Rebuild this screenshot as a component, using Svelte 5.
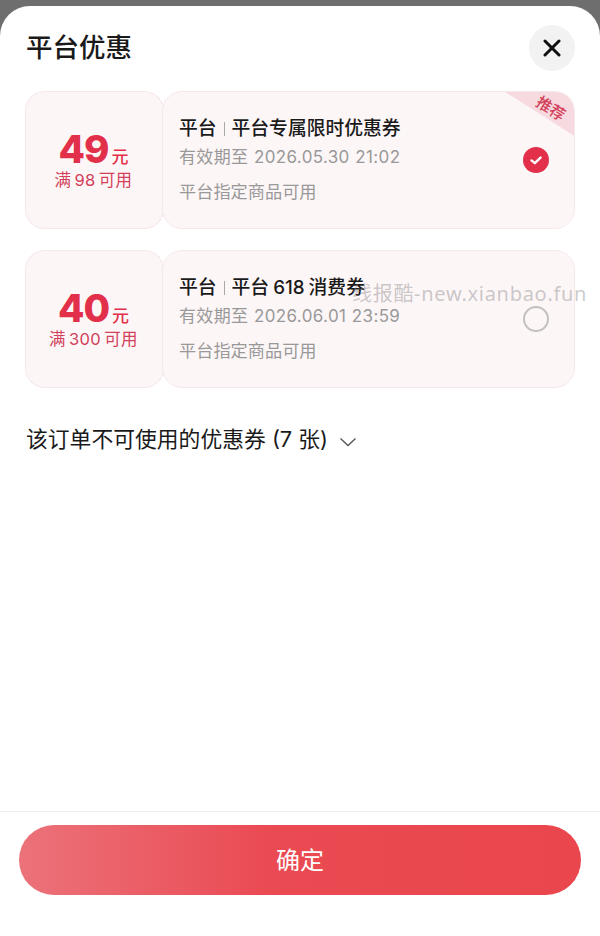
<script>
	const coupons = [
		{ amount: '49', min: '满 98 可用', name: '平台专属限时优惠券', expire: '2026.05.30 21:02', selected: true },
		{ amount: '40', min: '满 300 可用', name: '平台 618 消费券', expire: '2026.06.01 23:59', selected: false }
	];
</script>

<div class="page">
	<div class="sheet">
		<header class="header">
			<h1>平台优惠</h1>
			<button class="close" aria-label="关闭">
				<svg width="18" height="18" viewBox="0 0 18 18">
					<path d="M2 2 L16 16 M16 2 L2 16" stroke="#111" stroke-width="3" stroke-linecap="round" fill="none" />
				</svg>
			</button>
		</header>

		<div class="list">
			{#each coupons as c}
				<div class="coupon">
					<div class="left">
						<div class="price"><b>{c.amount}</b><span>元</span></div>
						<div class="min">{c.min}</div>
					</div>
					<div class="right">
						<div class="info">
							<div class="title">平台<i></i>{c.name}</div>
							<div class="expire">有效期至 {c.expire}</div>
							<div class="scope">平台指定商品可用</div>
						</div>
						{#if c.selected}
							<svg class="radio" width="26" height="26" viewBox="0 0 26 26">
								<circle cx="13" cy="13" r="13" fill="#e2304a" />
								<path d="M8.5 13.4 L11.8 16.2 L17.6 10.6" stroke="#fff" stroke-width="2.4" stroke-linecap="round" stroke-linejoin="round" fill="none" />
							</svg>
							<div class="ribbon"><span>推荐</span></div>
						{:else}
							<span class="radio empty"></span>
						{/if}
					</div>
				</div>
			{/each}
		</div>

		<div class="unusable">
			<span>该订单不可使用的优惠券 (7 张)</span>
			<svg width="18" height="10" viewBox="0 0 18 10">
				<path d="M1.5 1.5 L9 8.5 L16.5 1.5" stroke="#555" stroke-width="1.3" fill="none" />
			</svg>
		</div>

		<footer class="footer">
			<button class="confirm">确定</button>
		</footer>

		<div class="watermark">线报酷-new.xianbao.fun</div>
	</div>
</div>

<style>
	:global(body) {
		margin: 0;
	}
	.page {
		width: 600px;
		height: 936px;
		padding-top: 6px;
		box-sizing: border-box;
		background: linear-gradient(#6e6e6e, #7c7c7c);
		font-family: 'Inter', 'Noto Sans CJK SC', sans-serif;
	}
	.sheet {
		position: relative;
		height: 930px;
		background: #fff;
		border-radius: 30px 30px 0 0;
		display: flex;
		flex-direction: column;
		overflow: hidden;
	}
	.header {
		display: flex;
		justify-content: space-between;
		align-items: center;
		padding: 19px 25px 0 26px;
		height: 46px;
	}
	h1 {
		margin: -2px 0 0;
		font-size: 26.5px;
		font-weight: 500;
		color: #1a1a1a;
		line-height: 46px;
	}
	.close {
		width: 46px;
		height: 46px;
		border: none;
		border-radius: 50%;
		background: #f2f2f2;
		display: flex;
		align-items: center;
		justify-content: center;
		padding: 0;
	}
	.list {
		display: flex;
		flex-direction: column;
		gap: 21px;
		padding: 20px 25px 0;
	}
	.coupon {
		display: flex;
		height: 138px;
	}
	.left {
		width: 139px;
		box-sizing: border-box;
		background: #fdf6f7;
		border: 1.5px solid #f6e8ea;
		border-right: 1.5px dashed #f0d8dd;
		border-radius: 20px;
		display: flex;
		flex-direction: column;
		align-items: center;
		justify-content: center;
		color: #d2405a;
		padding: 0 2px 1px 0;
	}
	.price {
		display: flex;
		align-items: baseline;
		color: #e2304a;
		line-height: 40px;
		height: 40px;
	}
	.price b {
		font-size: 38.5px;
		font-weight: 800;
		letter-spacing: -1px;
	}
	.price span {
		font-size: 17px;
		margin-left: 3px;
		font-weight: 500;
	}
	.min {
		font-size: 16.5px;
		line-height: 22px;
		word-spacing: -2px;
		letter-spacing: 0.4px;
	}
	.right {
		position: relative;
		flex: 1;
		margin-left: -2px;
		box-sizing: border-box;
		background: #fdf6f7;
		border: 1.5px solid #f6e8ea;
		border-radius: 20px;
		display: flex;
		align-items: center;
		justify-content: space-between;
		padding: 0 25px 0 16px;
		overflow: hidden;
	}
	.info {
		display: flex;
		flex-direction: column;
		margin-top: 1px;
	}
	.title {
		display: flex;
		align-items: center;
		font-size: 18.8px;
		font-weight: 500;
		color: #1a1a1a;
		line-height: 26px;
		word-spacing: -1px;
	}
	.title i {
		width: 1px;
		height: 14px;
		background: #aaa;
		margin: 0 7px 0 7px;
	}
	.expire {
		font-size: 17px;
		color: #999;
		line-height: 26px;
		margin-top: 2px;
		word-spacing: 0.5px;
		letter-spacing: 0.35px;
	}
	.scope {
		font-size: 17.2px;
		color: #999;
		line-height: 26px;
		margin-top: 9px;
	}
	.radio {
		flex: none;
	}
	.empty {
		box-sizing: border-box;
		width: 26px;
		height: 26px;
		border: 2px solid #c4c0c0;
		border-radius: 50%;
	}
	.ribbon {
		position: absolute;
		top: -2px;
		right: -2px;
		width: 74px;
		height: 47px;
		background: #f7dae0;
		clip-path: polygon(0 0, 100% 0, 100% 100%);
	}
	.ribbon span {
		position: absolute;
		top: 11px;
		right: 10px;
		font-size: 15.5px;
		line-height: 16px;
		font-weight: 500;
		color: #d2405a;
		transform: rotate(32deg);
	}
	.unusable {
		display: flex;
		align-items: center;
		gap: 11px;
		padding: 36px 26px 0;
		font-size: 21.8px;
		line-height: 30px;
		color: #1a1a1a;
	}
	.unusable svg {
		margin-top: 5px;
	}
	.footer {
		margin-top: auto;
		border-top: 1px solid #eeeeee;
		padding: 13px 19px 41px;
	}
	.confirm {
		display: block;
		width: 100%;
		height: 70px;
		border: none;
		border-radius: 35px;
		background: linear-gradient(90deg, #ec727a 0%, #ea4a52 45%, #ea464d 100%);
		color: #fff;
		font-family: inherit;
		font-size: 24px;
		font-weight: 400;
		padding: 0 0 4px;
	}
	.watermark {
		position: absolute;
		left: 352px;
		top: 274px;
		font-family: 'Noto Sans', 'Noto Sans CJK SC', sans-serif;
		font-size: 20px;
		line-height: 28px;
		letter-spacing: 0.7px;
		color: rgba(130, 130, 130, 0.42);
		white-space: nowrap;
	}
</style>
